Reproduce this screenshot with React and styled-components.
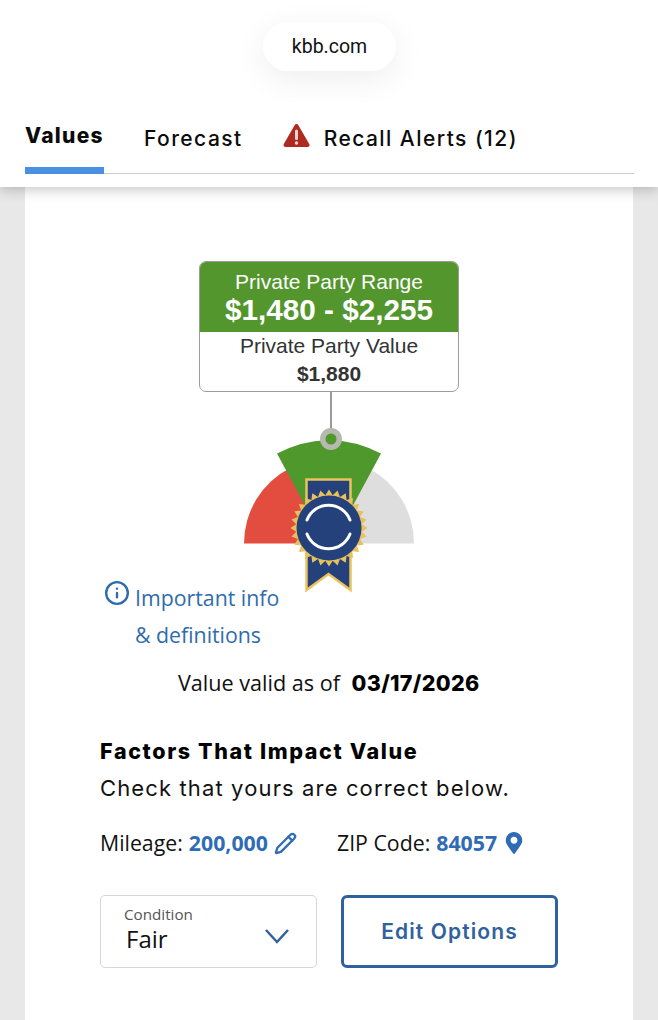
import React from "react";
import styled, { createGlobalStyle } from "styled-components";
import { Pencil, Info } from "lucide-react";
import { FaMapMarkerAlt } from "react-icons/fa";

const GlobalStyle = createGlobalStyle`
html, body {
  margin: 0;
  padding: 0;
  background: #e8e8e8;
}
* {
  box-sizing: border-box;
}
`;

const burstPoints = (cx, cy, outer, inner, count) => {
  const pts = [];
  for (let i = 0; i < count * 2; i++) {
    const r = i % 2 === 0 ? outer : inner;
    const a = (Math.PI * i) / count;
    pts.push(`${(cx + r * Math.sin(a)).toFixed(1)},${(cy - r * Math.cos(a)).toFixed(1)}`);
  }
  return pts.join(" ");
};

const Gauge = () => (
  <GaugeSvg viewBox="0 0 200 180" width="200" height="180">
    <path d="M14 123.5 A85 85 0 0 1 60 48 L 99 123.5 Z" fill="#e34d3f" />
    <path d="M184 123.5 A85 85 0 0 0 138 48 L 99 123.5 Z" fill="#dedede" />
    <path d="M47 33.5 Q99 7 151 33.5 L 99 130 Z" fill="#4f982c" />
    <path d="M76.5 59.5 H120.5 V170 L98.5 154 L76.5 170 Z" fill="#24417c" stroke="#e9c35c" strokeWidth="2.5" />
    <polygon points={burstPoints(99, 108, 38.5, 33, 28)} fill="#e9c05a" />
    <circle cx="99" cy="108" r="32.5" fill="#24417c" />
    <path d="M77 100 A23 23 0 0 1 120 100" fill="none" stroke="#fff" strokeWidth="3" strokeLinecap="round" />
    <path d="M77 114 A23 23 0 0 0 120 114" fill="none" stroke="#fff" strokeWidth="3" strokeLinecap="round" />
    <circle cx="101" cy="19" r="8.25" fill="#4f982c" stroke="#b7b8b0" strokeWidth="5.5" />
  </GaugeSvg>
);

const App = () => (
  <Page>
    <GlobalStyle />
    <Header>
      <UrlPill>kbb.com</UrlPill>
      <Tabs>
        <Tab $active>Values</Tab>
        <Tab>Forecast</Tab>
        <Tab>
          <svg width="27" height="25" viewBox="0 0 27 25">
            <path d="M13.5 3 L24.5 22 H2.5 Z" fill="#b02a20" stroke="#b02a20" strokeWidth="4" strokeLinejoin="round" />
            <path d="M13.5 8 V15.5" stroke="#f3d6d2" strokeWidth="3" strokeLinecap="round" />
            <circle cx="13.5" cy="20" r="1.7" fill="#f3d6d2" />
          </svg>
          Recall Alerts (12)
        </Tab>
      </Tabs>
    </Header>
    <Card>
      <PriceBox>
        <PriceTop>
          <RangeLabel>Private Party Range</RangeLabel>
          <RangeValue>$1,480 - $2,255</RangeValue>
        </PriceTop>
        <PriceBottom>
          <ValueLabel>Private Party Value</ValueLabel>
          <ValueAmount>$1,880</ValueAmount>
        </PriceBottom>
      </PriceBox>
      <GaugeWrap>
        <Stem />
        <Gauge />
      </GaugeWrap>
      <InfoRow>
        <Info size={26} strokeWidth={2.2} color="#2f6cab" />
        <InfoText>
          Important info
          <br />
          &amp; definitions
        </InfoText>
      </InfoRow>
      <ValidRow>
        Value valid as of <ValidDate>03/17/2026</ValidDate>
      </ValidRow>
      <FactorsTitle>Factors That Impact Value</FactorsTitle>
      <FactorsSub>Check that yours are correct below.</FactorsSub>
      <FactsRow>
        <Fact>
          Mileage: <FactValue>200,000</FactValue>
          <Pencil size={23} strokeWidth={2.4} color="#2f6cb5" />
        </Fact>
        <Fact>
          ZIP Code: <FactValue>84057</FactValue>
          <FaMapMarkerAlt size={22} color="#2f6cb5" />
        </Fact>
      </FactsRow>
      <Controls>
        <SelectBox>
          <SelectText>
            <SelectLabel>Condition</SelectLabel>
            <SelectValue>Fair</SelectValue>
          </SelectText>
          <svg width="26" height="16" viewBox="0 0 26 16">
            <path d="M2 2 L13 14 L24 2" fill="none" stroke="#2f619f" strokeWidth="2.5" />
          </svg>
        </SelectBox>
        <EditButton>Edit Options</EditButton>
      </Controls>
    </Card>
  </Page>
);

const Page = styled.div`
position: relative;
width: 658px;
height: 1020px;
overflow: hidden;
background-color: #e8e8e8;
`

const Header = styled.header`
position: relative;
z-index: 2;
height: 187px;
background-color: #fff;
padding: 22px 24px 0 25px;
box-shadow: 0 3px 12px rgba(0, 0, 0, 0.22);
display: flex;
flex-direction: column;
`

const UrlPill = styled.div`
align-self: center;
width: 133px;
height: 49px;
border-radius: 25px;
background-color: #fff;
box-shadow: 0 8px 32px rgba(0, 0, 0, 0.07);
display: flex;
align-items: center;
justify-content: center;
font-family: "Roboto", sans-serif;
font-size: 19.5px;
color: #111;
`

const Tabs = styled.nav`
margin-top: 49px;
height: 54px;
display: flex;
gap: 40px;
border-bottom: 1px solid #c9ccd1;
`

const Tab = styled.div`
height: 54px;
display: flex;
align-items: flex-start;
gap: 14px;
padding-top: ${p => (p.$active ? "3px" : "6px")};
font-family: "Inter", sans-serif;
font-size: 21px;
line-height: 26px;
font-weight: ${p => (p.$active ? 800 : 500)};
letter-spacing: ${p => (p.$active ? "1.3px" : "1.45px")};
color: #0b0b0b;
border-bottom: ${p => (p.$active ? "7px solid #4a90e2" : "0")};
svg {
  margin-top: -3px;
}
`

const Card = styled.main`
width: 608px;
height: 833px;
margin-left: 25px;
background-color: #fff;
padding: 74px 0 0 75px;
`

const PriceBox = styled.div`
width: 260px;
height: 131px;
margin-left: 99px;
border: 1.5px solid #9c9c9c;
border-radius: 7px;
overflow: hidden;
font-family: "Liberation Sans", Arial, sans-serif;
text-align: center;
`

const PriceTop = styled.div`
height: 70px;
padding-top: 9px;
background-color: #52962d;
color: #fff;
`

const RangeLabel = styled.div`
font-size: 21px;
line-height: 22px;
`

const RangeValue = styled.div`
font-size: 29.7px;
line-height: 33px;
font-weight: bold;
`

const PriceBottom = styled.div`
padding-top: 2px;
color: #333;
`

const ValueLabel = styled.div`
font-size: 21px;
line-height: 24px;
`

const ValueAmount = styled.div`
margin-top: 4px;
font-size: 21px;
line-height: 24px;
font-weight: bold;
`

const GaugeWrap = styled.div`
position: relative;
width: 200px;
height: 208px;
margin-left: 130px;
`

const Stem = styled.div`
width: 1.5px;
height: 40px;
margin-left: 100px;
background-color: #999;
`

const GaugeSvg = styled.svg`
position: absolute;
left: 0;
top: 28px;
`

const InfoRow = styled.div`
display: flex;
align-items: flex-start;
gap: 5px;
margin-left: 4px;
margin-top: -20px;
`

const InfoText = styled.div`
margin-top: -1px;
font-family: "Open Sans", sans-serif;
font-size: 21.3px;
line-height: 37px;
color: #2f6cab;
`

const ValidRow = styled.div`
margin-top: 15px;
margin-left: 78px;
font-family: "Open Sans", sans-serif;
font-size: 21.6px;
line-height: 30px;
color: #111;
`

const ValidDate = styled.span`
margin-left: 6px;
font-family: "Inter", sans-serif;
font-weight: 800;
font-size: 21.5px;
letter-spacing: 0.3px;
color: #000;
`

const FactorsTitle = styled.h2`
margin: 38px 0 0;
font-family: "Inter", sans-serif;
font-size: 21.5px;
line-height: 30px;
font-weight: 800;
letter-spacing: 1.62px;
color: #000;
`

const FactorsSub = styled.p`
margin: 7px 0 0;
font-family: "Inter", sans-serif;
font-size: 22px;
line-height: 30px;
font-weight: 400;
letter-spacing: 1.13px;
color: #111;
`

const FactsRow = styled.div`
display: flex;
gap: 40px;
margin-top: 25px;
`

const Fact = styled.div`
display: flex;
align-items: center;
gap: 6px;
font-family: "Open Sans", sans-serif;
font-size: 21.3px;
line-height: 30px;
color: #111;
`

const FactValue = styled.span`
font-weight: 700;
color: #2f6cb5;
`

const Controls = styled.div`
display: flex;
gap: 24px;
margin-top: 37px;
`

const SelectBox = styled.div`
width: 217px;
height: 73px;
padding: 9px 26px 0 25px;
border: 1.5px solid #d6d6d6;
border-radius: 5px;
display: flex;
align-items: center;
justify-content: space-between;
`

const SelectText = styled.div`
display: flex;
flex-direction: column;
font-family: "Open Sans", sans-serif;
margin-top: -14px;
`

const SelectLabel = styled.span`
font-size: 15.2px;
line-height: 20px;
color: #555;
margin-left: -2px;
`

const SelectValue = styled.span`
font-size: 24px;
line-height: 30px;
color: #111;
`

const EditButton = styled.button`
width: 217px;
height: 73px;
background-color: #fff;
border: 3px solid #2f619f;
border-radius: 6px;
font-family: "Inter", sans-serif;
font-size: 21px;
font-weight: 600;
letter-spacing: 1.1px;
color: #2f619f;
padding: 0;
`

export default App;
